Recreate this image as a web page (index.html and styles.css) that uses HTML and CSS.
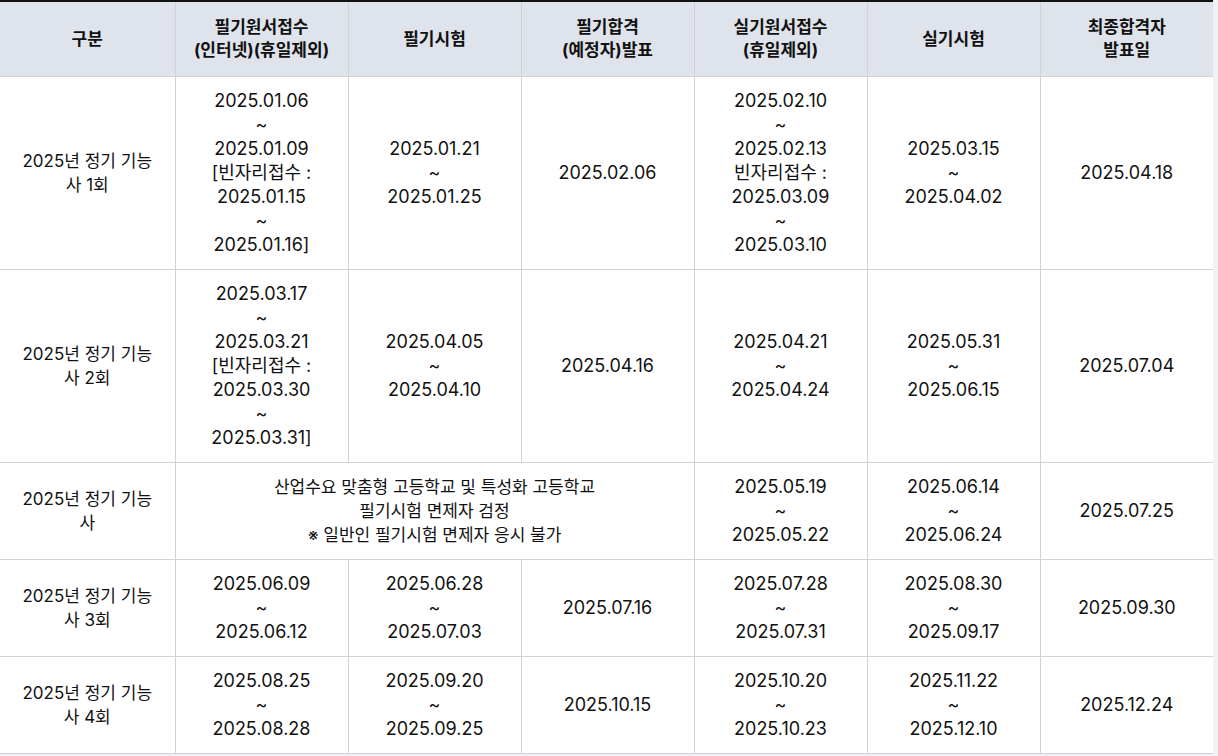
FILE: index.html
```html
<!DOCTYPE html>
<html lang="ko">
<head>
<meta charset="utf-8">
<link rel="stylesheet" href="styles.css">
</head>
<body>
<table class="sched">
  <colgroup>
    <col class="c1"><col class="cn"><col class="cn"><col class="cn"><col class="cn"><col class="cn"><col class="cn">
  </colgroup>
  <thead>
    <tr>
      <th>구분</th>
      <th>필기원서접수<br>(인터넷)(휴일제외)</th>
      <th>필기시험</th>
      <th>필기합격<br>(예정자)발표</th>
      <th>실기원서접수<br>(휴일제외)</th>
      <th>실기시험</th>
      <th>최종합격자<br>발표일</th>
    </tr>
  </thead>
  <tbody>
    <tr>
      <td class="label">2025년 정기 기능사 1회</td>
      <td>2025.01.06<br>~<br>2025.01.09<br>[빈자리접수 : 2025.01.15<br>~<br>2025.01.16]</td>
      <td>2025.01.21<br>~<br>2025.01.25</td>
      <td>2025.02.06</td>
      <td>2025.02.10<br>~<br>2025.02.13<br>빈자리접수 : 2025.03.09<br>~<br>2025.03.10</td>
      <td>2025.03.15<br>~<br>2025.04.02</td>
      <td>2025.04.18</td>
    </tr>
    <tr>
      <td class="label">2025년 정기 기능사 2회</td>
      <td>2025.03.17<br>~<br>2025.03.21<br>[빈자리접수 : 2025.03.30<br>~<br>2025.03.31]</td>
      <td>2025.04.05<br>~<br>2025.04.10</td>
      <td>2025.04.16</td>
      <td>2025.04.21<br>~<br>2025.04.24</td>
      <td>2025.05.31<br>~<br>2025.06.15</td>
      <td>2025.07.04</td>
    </tr>
    <tr>
      <td class="label">2025년 정기 기능사</td>
      <td class="note" colspan="3">산업수요 맞춤형 고등학교 및 특성화 고등학교<br>필기시험 면제자 검정<br>※ 일반인 필기시험 면제자 응시 불가</td>
      <td>2025.05.19<br>~<br>2025.05.22</td>
      <td>2025.06.14<br>~<br>2025.06.24</td>
      <td>2025.07.25</td>
    </tr>
    <tr>
      <td class="label">2025년 정기 기능사 3회</td>
      <td>2025.06.09<br>~<br>2025.06.12</td>
      <td>2025.06.28<br>~<br>2025.07.03</td>
      <td>2025.07.16</td>
      <td>2025.07.28<br>~<br>2025.07.31</td>
      <td>2025.08.30<br>~<br>2025.09.17</td>
      <td>2025.09.30</td>
    </tr>
    <tr>
      <td class="label">2025년 정기 기능사 4회</td>
      <td>2025.08.25<br>~<br>2025.08.28</td>
      <td>2025.09.20<br>~<br>2025.09.25</td>
      <td>2025.10.15</td>
      <td>2025.10.20<br>~<br>2025.10.23</td>
      <td>2025.11.22<br>~<br>2025.12.10</td>
      <td>2025.12.24</td>
    </tr>
  </tbody>
</table>
</body>
</html>
```

FILE: styles.css
```css
html, body {
  margin: 0;
  padding: 0;
  background: #eff1f5;
}

.sched {
  width: 1213px;
  table-layout: fixed;
  border-collapse: collapse;
  background: #ffffff;
  font-family: Inter, "Noto Sans CJK KR", sans-serif;
  color: #111111;
  border-top: 2px solid #111111;
  border-bottom: 1px solid #cfcfcf;
}

.c1 { width: 175px; }
.cn { width: 173px; }

.sched th {
  background: #dfe3eb;
  font-size: 17px;
  font-weight: 700;
  line-height: 23px;
  padding: 14px 2px;
  text-align: center;
  vertical-align: middle;
  border-right: 1px solid #d2d2d2;
  border-bottom: 1px solid #d2d2d2;
}

.sched td {
  font-size: 18px;
  font-weight: 400;
  line-height: 24px;
  padding: 12px 16px;
  text-align: center;
  vertical-align: middle;
  border-right: 1px solid #d2d2d2;
  border-bottom: 1px solid #d2d2d2;
}

.sched td.label {
  font-size: 17px;
  padding: 12px 20px;
}

.sched td.note {
  font-size: 17px;
}

.sched th:last-child,
.sched td:last-child {
  border-right: none;
}
```
